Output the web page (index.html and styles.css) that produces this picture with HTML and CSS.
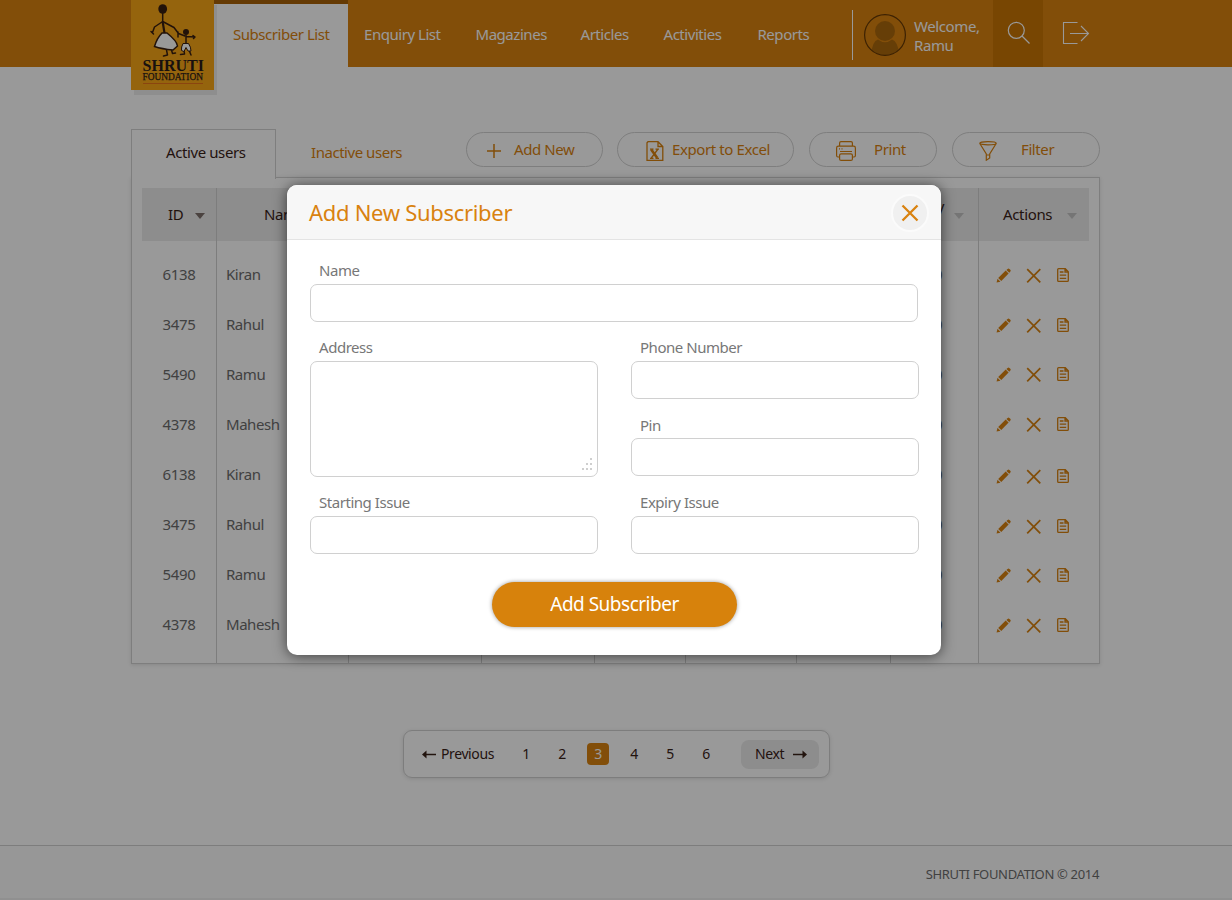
FILE: index.html
```html
<!DOCTYPE html>
<html lang="en">
<head>
<meta charset="utf-8">
<title>Shruti Foundation - Subscribers</title>
<link rel="stylesheet" href="styles.css">
</head>
<body>
<svg class="defs" width="0" height="0">
  <symbol id="pencil" viewBox="0 0 15 15"><path d="M.6 14.600 1.500 10.800 4.400 13.700z"/><path d="M2.200 9.900 9.700 2.600 12.600 5.500 5.300 12.900z"/><path d="M10.400 1.900 11.600.9q.9-.8 1.800 0l.9.9q.8.9 0 1.800L13.300 4.800z"/></symbol>
  <symbol id="cross" viewBox="0 0 15 15"><path d="M1.200 1.200 14.300 14.300M14.300 1.200 1.200 14.300" fill="none" stroke="currentColor" stroke-width="1.700"/></symbol>
  <symbol id="doc" viewBox="0 0 12 14"><path d="M1.600.7H8.300L11.300 3.700V12.400Q11.300 13.300 10.400 13.300H1.600Q.7 13.300.7 12.400V1.600Q.7.7 1.600.7zM8 .7V4H11.300M2.800 4H6.500M2.800 7.200H9.200M2.800 10.300H9.200" fill="none" stroke="currentColor" stroke-width="1.300"/></symbol>
</svg>
<div class="page">
  <header class="header">
    <div class="wrap bar">
      <div class="logo">
        <svg width="83" height="90" viewBox="0 0 83 90">
          <g fill="none" stroke="#3a1f10" stroke-width="1.500" stroke-linecap="round" stroke-linejoin="round">
            <path d="M31.700 12V21.500M31.700 21.500 23.500 27 21.500 32.500M20 31.500 22.500 34M31.700 21.500 43 27.500 47.500 33.500 54 36M47 32V37M35.500 50 36.500 55 32.500 56M40.500 50 41.500 53.500 44.500 53"/>
            <path d="M31.700 22 33.500 33" stroke-width="2.200"/>
            <path d="M55 35V45M55 36.500 64 37M62 35.500 64 37 62.500 38.500M53 50 53.500 54 49.500 54.500M58 50 60 55"/>
          </g>
          <ellipse cx="31.700" cy="9" rx="4.400" ry="4.800" fill="#3a1f10"/>
          <circle cx="55" cy="32" r="3" fill="#3a1f10"/>
          <path d="M31 33 36 33Q46 41 46.500 46L42 50Q31 49 23.500 46.500Q26 38 31 33Z" fill="#fff" stroke="#3a1f10" stroke-width="1.500"/>
          <path d="M52 43.500 57.500 43.500Q60 47 60 51L57 51 55 47.500 53 51.500 50.500 50.500Q50 47 52 43.500Z" fill="#fff" stroke="#3a1f10"/>
          <text class="brand" x="11.500" y="71" font-size="17" font-weight="bold" textLength="61.500" lengthAdjust="spacingAndGlyphs">SHRUTI</text>
          <text class="brand" x="11.500" y="80" font-size="10" stroke="#2a1c1a" stroke-width=".25" textLength="60.500" lengthAdjust="spacingAndGlyphs">FOUNDATION</text>
          <path d="M12 83.500H72" stroke="#e8741a" stroke-width="1"/>
        </svg>
      </div>
      <nav class="nav">
        <a class="current">Subscriber List</a><a>Enquiry List</a><a>Magazines</a><a>Articles</a><a>Activities</a><a>Reports</a>
      </nav>
      <div class="account">
        <svg width="42" height="42" viewBox="0 0 42 42"><defs><clipPath id="c"><circle cx="21" cy="21" r="20"/></clipPath></defs><g clip-path="url(#c)" fill="#ab680d"><circle cx="21" cy="17" r="10"/><path d="M7 42Q8 27 14 25.500Q21 31 28 25.500Q34 27 35.500 42z"/></g><circle cx="21" cy="21" r="20.400" fill="none" stroke="#643805" stroke-width="1.200"/></svg>
        <span>Welcome,<br>Ramu</span>
      </div>
      <div class="search"><svg width="24" height="24" viewBox="0 0 24 24" fill="none" stroke="#fff" stroke-width="1.200"><circle cx="9.300" cy="9.300" r="8"/><path d="M15 15 22.500 22.500"/></svg></div>
      <div class="logout"><svg width="28" height="24" viewBox="0 0 28 24" fill="none" stroke="#fff" stroke-width="1.100"><path d="M15.500 1.500H1.500V22.500H15.500M8 12.500H26.500M19 5 26.500 12.500 19 20"/></svg></div>
    </div>
  </header>

  <main class="wrap main">
    <div class="toolbar">
      <div class="tab active">Active users</div>
      <div class="tab">Inactive users</div>
      <div class="buttons">
        <a class="btn add"><svg width="14" height="14" viewBox="0 0 14 14"><path d="M7 0V14M0 7H14" stroke="currentColor" stroke-width="1.500"/></svg><span>Add New</span></a>
        <a class="btn export"><svg width="18" height="20" viewBox="0 0 18 20" fill="none" stroke="currentColor" stroke-width="1.300"><path d="M2 .7H12L16.800 5.500V19.300H1V1.700zM12 1V5.500H16.500"/><path d="M5.200 8.500 11.300 17" stroke-width="2.600"/><path d="M11.700 8.500 5.300 17M4 8.200H7.500M9.500 8.200H13M4 17.300H7.500M9.500 17.300H13" stroke-width="1.300"/></svg><span>Export to Excel</span></a>
        <a class="btn print"><svg width="20" height="20" viewBox="0 0 20 20" fill="none" stroke="currentColor" stroke-width="1.200"><path d="M3.600 5V2Q3.600.6 5 .6H15Q16.400.6 16.400 2V5M3.600 16H2Q.6 16 .6 14.500V7Q.6 5.200 2.400 5.200H17.600Q19.400 5.200 19.400 7V14.500Q19.400 16 18 16H16.400M4 10.500H16M3 7.800H4M5.500 7.800H6.500"/><rect x="3.600" y="12.800" width="12.800" height="6.600" rx="1.500"/></svg><span>Print</span></a>
        <a class="btn filter"><svg width="18" height="20" viewBox="0 0 18 20" fill="none" stroke="currentColor" stroke-width="1.200"><ellipse cx="9" cy="2.300" rx="8.200" ry="1.600"/><path d="M.8 2.500 7.300 13V19.200L10.700 17V13L17.200 2.500M7.300 14H10.700"/></svg><span>Filter</span></a>
      </div>
    </div>
    <section class="panel">
      <div class="row head">
        <div class="id">ID<i class="sort on"></i></div><div class="name">Name</div><div></div><div></div><div></div><div></div><div></div><div class="expiry"><span>Expiry</span><i class="sort"></i></div><div class="actions">Actions<i class="sort"></i></div>
      </div>
      <div class="row"><div>6138</div><div>Kiran</div><div></div><div></div><div></div><div></div><div></div><div class="issue">0</div><div class="icons"><svg><use href="#pencil"/></svg><svg><use href="#cross"/></svg><svg><use href="#doc"/></svg></div></div>
      <div class="row"><div>3475</div><div>Rahul</div><div></div><div></div><div></div><div></div><div></div><div class="issue">0</div><div class="icons"><svg><use href="#pencil"/></svg><svg><use href="#cross"/></svg><svg><use href="#doc"/></svg></div></div>
      <div class="row up"><div>5490</div><div>Ramu</div><div></div><div></div><div></div><div></div><div></div><div class="issue">0</div><div class="icons"><svg><use href="#pencil"/></svg><svg><use href="#cross"/></svg><svg><use href="#doc"/></svg></div></div>
      <div class="row up"><div>4378</div><div>Mahesh</div><div></div><div></div><div></div><div></div><div></div><div class="issue">0</div><div class="icons"><svg><use href="#pencil"/></svg><svg><use href="#cross"/></svg><svg><use href="#doc"/></svg></div></div>
      <div class="row down"><div>6138</div><div>Kiran</div><div></div><div></div><div></div><div></div><div></div><div class="issue">0</div><div class="icons"><svg><use href="#pencil"/></svg><svg><use href="#cross"/></svg><svg><use href="#doc"/></svg></div></div>
      <div class="row down"><div>3475</div><div>Rahul</div><div></div><div></div><div></div><div></div><div></div><div class="issue">0</div><div class="icons"><svg><use href="#pencil"/></svg><svg><use href="#cross"/></svg><svg><use href="#doc"/></svg></div></div>
      <div class="row"><div>5490</div><div>Ramu</div><div></div><div></div><div></div><div></div><div></div><div class="issue">0</div><div class="icons"><svg><use href="#pencil"/></svg><svg><use href="#cross"/></svg><svg><use href="#doc"/></svg></div></div>
      <div class="row last"><div>4378</div><div>Mahesh</div><div></div><div></div><div></div><div></div><div></div><div class="issue">0</div><div class="icons"><svg><use href="#pencil"/></svg><svg><use href="#cross"/></svg><svg><use href="#doc"/></svg></div></div>
    </section>
    <div class="pager">
      <a class="prev"><svg width="14" height="9" viewBox="0 0 14 9"><path d="M3 4.500H14" stroke="currentColor" stroke-width="1.500"/><path d="M0 4.500 4.500.5V8.500z"/></svg>Previous</a>
      <a>1</a><a>2</a><a class="here"><b>3</b></a><a>4</a><a>5</a><a>6</a>
      <a class="next">Next<svg width="14" height="9" viewBox="0 0 14 9"><path d="M0 4.500H11" stroke="currentColor" stroke-width="1.500"/><path d="M14 4.500 9.500.5V8.500z"/></svg></a>
    </div>
  </main>
  <footer class="footer"><div class="wrap">SHRUTI FOUNDATION © 2014</div></footer>
</div>

<div class="overlay">
  <form class="modal">
    <div class="modal-head">
      <h2>Add New Subscriber</h2>
      <span class="close"><svg width="18" height="18" viewBox="0 0 18 18"><path d="M1.500 1.500 16.500 16.500M16.500 1.500 1.500 16.500" stroke="#d9820f" stroke-width="2.300"/></svg></span>
    </div>
    <div class="fields">
      <label class="full">Name<span class="box"></span></label>
      <label class="tall">Address<span class="box"><svg class="grip" width="11" height="12" viewBox="0 0 11 12"><path d="M8 0h2v2H8zM4 5h2v2H4zM8 5h2v2H8zM0 10h2v2H0zM4 10h2v2H4zM8 10h2v2H8z"/></svg></span></label>
      <label>Phone Number<span class="box"></span></label>
      <label class="pin">Pin<span class="box"></span></label>
      <label>Starting Issue<span class="box"></span></label>
      <label>Expiry Issue<span class="box"></span></label>
    </div>
    <div class="submit">Add Subscriber</div>
  </form>
</div>
</body>
</html>
```
FILE: styles.css
```css
* { box-sizing: border-box; }
body { margin: 0; font: 15px/20px "Noto Sans", sans-serif; font-stretch: 90%; letter-spacing: -0.46px; color: #3a2218; }
svg { display: block; flex: none; fill: currentColor; }
.defs { position: absolute; }
svg[fill="none"] { fill: none; }
.page { height: 900px; display: flex; flex-direction: column; background: #fff; overflow: hidden; }
.wrap { width: 969px; margin-left: 131px; }

.header { height: 67px; flex: none; background: #d9820f; color: #fff; }
.bar { display: flex; height: 67px; }
.logo { width: 83px; height: 90px; background: #f9a716; box-shadow: 3px 5px 0 #ededed; flex: none; z-index: 1; }
.brand { font-family: "Liberation Serif", serif; fill: #2a1c1a; letter-spacing: 0; }
.nav { display: flex; width: 638px; line-height: 69px; }
.nav a { white-space: nowrap; }
.nav a:nth-child(2) { width: 111.5px; margin-left: 16px; }
.nav a:nth-child(3) { width: 105px; }
.nav a:nth-child(4) { width: 83px; }
.nav a:nth-child(5) { width: 94px; }
.nav .current { width: 134px; padding-left: 19px; line-height: 61px; border-top: 4px solid #a86108; background: #fff; color: #d9820f; }
.account { display: flex; width: 141px; height: 50px; margin-top: 10px; padding: 4px 0 0 11px; border-left: 1px solid #fff; line-height: 19px; letter-spacing: -0.4px; }
.account span { padding: 3px 0 0 8px; }
.search { width: 50px; background: #c87504; padding: 21px 0 0 14px; }
.logout { padding: 21px 0 0 19px; }

.main { flex: 1; }
.toolbar { display: flex; height: 49px; margin-top: 62px; }
.tab { width: 145px; line-height: 46px; padding-left: 35px; color: #d9820f; }
.tab.active { height: 50px; color: #3a2218; background: #fff; border: 1px solid #d2d2d2; border-bottom: 0; z-index: 1; padding-left: 34px; line-height: 44px; letter-spacing: -0.4px; }
.buttons { display: flex; margin: 3px 0 0 45px; letter-spacing: -0.4px; }
.btn { display: flex; align-items: center; height: 35px; border: 1px solid #d2d2d2; border-radius: 18px; color: #d9820f; white-space: nowrap; }
.btn + .btn { margin-left: 15px; }
.btn.add { width: 137px; padding-left: 20px; gap: 13px; }
.btn.btn.export { width: 177px; padding-left: 28px; gap: 8px; margin-left: 14px; }
.btn.print { width: 128px; padding-left: 26px; gap: 18px; }
.btn.filter { width: 148px; padding-left: 26px; gap: 24px; }
.btn svg { margin-top: 2px; }
.btn span { margin-top: -2px; }

.panel { height: 487px; margin-top: -1px; padding: 10px 10px 0; border: 1px solid #d2d2d2; box-shadow: 0 1px 4px rgba(0,0,0,.12); color: #6d6d6d; }
.row { display: grid; grid-template-columns: 74px 132px 133px 113px 91px 111px 94px 88px 111px; height: 50px; line-height: 48px; }
.row > div + div { border-left: 1px solid #d0d0d0; padding-left: 9px; }
.row > div:first-child { padding-left: 20.5px; letter-spacing: -0.3px; }
.row.head { height: 53px; line-height: 53px; background: #ebebeb; color: #3a2218; }
.row.head .id { display: flex; align-items: center; padding-left: 26px; }
.row.head .name { padding-left: 47px; }
.row.head .expiry { display: flex; align-items: center; padding-left: 10px; }
.expiry span { margin-top: -16px; width: 49px; text-align: right; margin-left: -6px; }
.row.head .actions { display: flex; align-items: center; padding-left: 24px; letter-spacing: -0.35px; }
.sort { width: 0; height: 0; margin: 3px 0 0 10px; border: 5px solid transparent; border-bottom: 0; border-top: 6px solid #c4c4c4; }
.id .sort { margin-left: 12px; }
.actions .sort { margin-left: 15px; }
.sort.on { border-top-color: #7d706b; }
.row.head + .row { height: 59px; }
.row.head + .row > div { padding-top: 9px; }
.row.last { height: 63px; }
.row .issue { padding-right: 36px; text-align: right; }
.row .icons { display: flex; align-items: flex-start; gap: 15px; color: #d9820f; padding-left: 17px; }
.icons svg { width: 15px; height: 15px; margin-top: 18px; }
.icons svg:nth-child(3) { width: 12px; height: 14px; margin-left: 1px; }
.row.up .icons svg { margin-top: 17px; }
.row.up .icons svg:nth-child(3) { margin-top: 16.5px; }
.row.down .icons svg { margin-top: 19px; }

.pager { display: flex; align-items: center; width: 427px; height: 48px; margin: 66px 0 0 272px; padding-left: 18px; border: 1px solid #d0d0d0; border-radius: 9px; box-shadow: 0 1px 4px rgba(0,0,0,.12); font-size: 14px; letter-spacing: -0.4px; }
.pager a { width: 36px; text-align: center; }
.pager .prev { display: flex; align-items: center; gap: 5px; width: 86px; }
.pager .here b { display: block; width: 22px; height: 22px; margin: 0 auto; line-height: 22px; border-radius: 4px; background: #d9820f; color: #fff; font-weight: 400; }
.pager .next { display: flex; align-items: center; gap: 9px; width: 78px; height: 29px; margin-left: 17px; padding-left: 14px; border-radius: 8px; background: #ebebeb; }

.footer { height: 55px; flex: none; border-top: 1px solid #d0d0d0; background: #fcfcfc; border-bottom: 2px solid #f0f0f0; font-size: 13px; line-height: 56px; text-align: right; color: #6d6d6d; letter-spacing: -0.33px; }
.footer .wrap { padding-right: 1px; }

.overlay { position: absolute; z-index: 10; top: 0; left: 0; width: 1232px; height: 900px; background: rgba(0,0,0,.4); padding: 185px 0 0 287px; }
.modal { width: 654px; height: 470px; background: #fff; border-radius: 10px; box-shadow: 0 1px 14px rgba(0,0,0,.6); }
.modal-head { display: flex; justify-content: space-between; height: 55px; padding: 9px 12px 0 22px; border-radius: 10px 10px 0 0; background: #f7f7f7; border-bottom: 1px solid #e4e4e4; }
h2 { margin: 0; font-size: 22px; font-weight: 400; line-height: 37px; color: #d9820f; letter-spacing: -0.3px; }
.close { display: flex; align-items: center; justify-content: center; width: 38px; height: 38px; border-radius: 50%; background: #f0f0f0; border: 2px solid #fbfbfb; }
.fields { display: grid; grid-template-columns: 288px 288px; column-gap: 33px; row-gap: 15px; padding: 19px 0 0 23px; color: #777; }
label { display: flex; flex-direction: column; line-height: 22px; text-indent: 9px; height: 62px; gap: 3px; }
.box { height: 38px; border: 1px solid #d0d0d0; border-radius: 7px; background: #fff; flex: none; }
.full { grid-column: 1 / 3; width: 608px; }
.tall { grid-row: 2 / 4; height: 140px; }
.pin { gap: 2px; }
.tall .box { display: flex; justify-content: flex-end; align-items: flex-end; height: 116px; padding: 0 4px 6px 0; }
.grip { fill: #cfcfcf; }
.submit { width: 245px; height: 45px; margin: 29px 0 0 205px; border-radius: 23px; background: #d7820c; box-shadow: 0 0 4px rgba(0,0,0,.4); color: #fff; font-size: 19px; line-height: 45px; text-align: center; letter-spacing: -0.5px; }
```
